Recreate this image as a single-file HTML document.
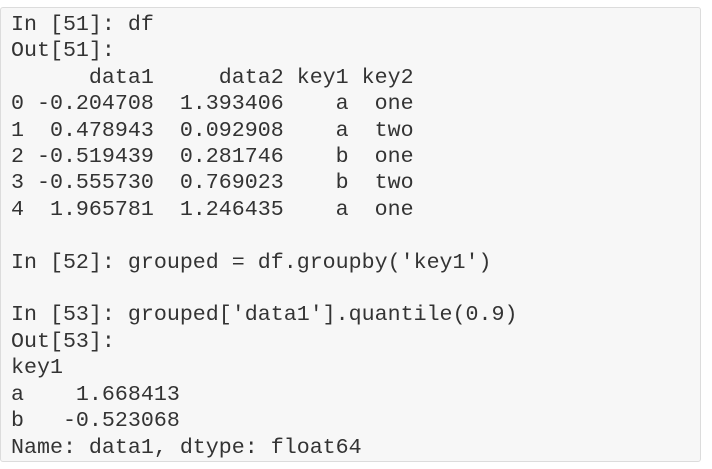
<!DOCTYPE html>
<html><head><style>
html,body{margin:0;padding:0;background:#fff;width:712px;height:469px;overflow:hidden}
.box{position:absolute;left:0;top:7px;width:701px;height:455px;background:#f7f7f7;border:1px solid #dcdcdc;border-radius:3px;box-sizing:border-box}
pre{position:absolute;left:11px;top:12px;margin:0;font-family:"Liberation Mono",monospace;font-size:21.65px;line-height:26.4px;color:#333}
</style></head><body>
<div class="box"></div>
<pre>In [51]: df
Out[51]:
      data1     data2 key1 key2
0 -0.204708  1.393406    a  one
1  0.478943  0.092908    a  two
2 -0.519439  0.281746    b  one
3 -0.555730  0.769023    b  two
4  1.965781  1.246435    a  one

In [52]: grouped = df.groupby('key1')

In [53]: grouped['data1'].quantile(0.9)
Out[53]:
key1
a    1.668413
b   -0.523068
Name: data1, dtype: float64</pre>
</body></html>
